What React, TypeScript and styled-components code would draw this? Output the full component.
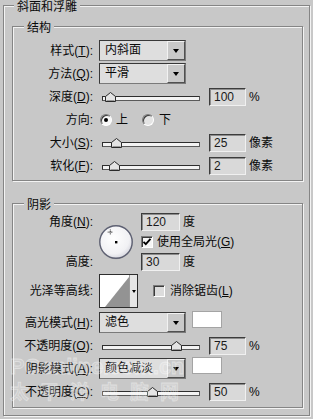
import React from "react";
import styled, { createGlobalStyle } from "styled-components";

const BG = "#c8c8c8";

const GlobalStyle = createGlobalStyle`
  html, body { margin: 0; padding: 0; background: ${BG}; }
  body {
    font-family: "Liberation Sans", "Noto Sans CJK SC", sans-serif;
    font-size: 12px;
    color: #0a0a0a;
  }
`;

const Page = styled.div`
  position: relative;
  width: 313px;
  height: 419px;
  overflow: hidden;
  background: ${BG};
`;

const Group = styled.fieldset<{ $pad: string; $margin: string }>`
  margin: ${(p) => p.$margin};
  padding: ${(p) => p.$pad};
  border: 1px solid #858585;
  box-shadow: inset 1px 1px 0 #f3f3f3, 1px 1px 0 #f3f3f3;
  min-width: 0;
  box-sizing: border-box;
`;

const Legend = styled.legend<{ $indent: number }>`
  margin-left: ${(p) => p.$indent}px;
  padding: 5px 3px 0;
  line-height: 13px;
  font-size: 12px;
  background: ${BG};
`;

const Row = styled.div<{ $h?: number; $mt?: number }>`
  display: grid;
  grid-template-columns: 80px 1fr;
  column-gap: 6px;
  align-items: center;
  height: ${(p) => p.$h ?? 23}px;
  margin-top: ${(p) => p.$mt ?? 0}px;
`;

const Label = styled.span<{ $row?: number }>`
  text-align: right;
  white-space: nowrap;
  line-height: 14px;
  grid-column: 1;
  ${(p) => (p.$row ? `grid-row: ${p.$row};` : "")}
`;

const Key = styled.span`
  text-decoration: underline;
  text-underline-offset: 1px;
`;

const Controls = styled.div<{ $row?: number }>`
  display: flex;
  align-items: center;
  height: 100%;
  white-space: nowrap;
  ${(p) => (p.$row ? `grid-row: ${p.$row}; grid-column: 3;` : "")}
`;

const Select = styled.div`
  width: 87px;
  height: 21px;
  box-sizing: border-box;
  display: flex;
  align-items: stretch;
  border: 1px solid;
  border-color: #383838 #7a7a7a #7a7a7a #383838;
  background: #dedede;
`;

const SelectText = styled.span`
  flex: 1;
  padding-left: 5px;
  line-height: 19px;
  white-space: nowrap;
`;

const SelectButton = styled.span`
  width: 18px;
  box-sizing: border-box;
  border: 1px solid;
  border-color: #f2f2f2 #505050 #505050 #f2f2f2;
  background: #c9c9c9;
  display: flex;
  align-items: center;
  justify-content: center;
  &::after {
    content: "";
    border-left: 3.5px solid transparent;
    border-right: 3.5px solid transparent;
    border-top: 4px solid #000;
  }
`;

const Field = styled.div<{ $w?: number }>`
  width: ${(p) => p.$w ?? 37}px;
  height: 18px;
  box-sizing: border-box;
  border: 1px solid;
  border-color: #3c3c3c #f0f0f0 #f0f0f0 #3c3c3c;
  box-shadow: inset 1px 1px 0 #8c8c8c;
  background: #d9d9d9;
  padding-left: 4px;
  line-height: 16px;
  font-size: 12px;
  color: #1a1a1a;
`;

const Unit = styled.span`
  margin-left: 3px;
  line-height: 14px;
`;

const Slider = styled.div`
  position: relative;
  width: 98px;
  height: 13px;
  margin: 0 9px 0 3px;
`;

const Track = styled.div`
  margin-top: 6px;
  height: 5px;
  box-sizing: border-box;
  border: 1px solid;
  border-color: #2e2e2e #5a5a5a #5a5a5a #2e2e2e;
  background: #f3f3f3;
`;

const Thumb = styled.svg`
  position: absolute;
  top: 2px;
  margin-left: -5px;
`;

const Radio = styled.span<{ $on?: boolean; $ml: number }>`
  width: 12px;
  height: 12px;
  margin-left: ${(p) => p.$ml}px;
  border-radius: 50%;
  box-sizing: border-box;
  border: 1px solid;
  border-color: #7a7a7a #ffffff #ffffff #7a7a7a;
  background: ${(p) => (p.$on ? "#f8f8f8" : "#e4e4e4")};
  box-shadow: inset 1px 1px 0 #3a3a3a;
  display: inline-flex;
  align-items: center;
  justify-content: center;
  &::after {
    content: "";
    width: 4px;
    height: 4px;
    border-radius: 50%;
    background: ${(p) => (p.$on ? "#000" : "transparent")};
  }
`;

const OptionText = styled.span<{ $ml: number }>`
  margin-left: ${(p) => p.$ml}px;
  line-height: 14px;
`;

const Check = styled.span<{ $on?: boolean; $ml?: number }>`
  width: 12px;
  height: 12px;
  margin-left: ${(p) => p.$ml ?? 0}px;
  box-sizing: border-box;
  border: 1px solid;
  border-color: #7a7a7a #ffffff #ffffff #7a7a7a;
  box-shadow: inset 1px 1px 0 #3a3a3a;
  background: ${(p) => (p.$on ? "#f6f6f6" : "#dcdcdc")};
  display: inline-flex;
  align-items: center;
  justify-content: center;
`;

const Swatch = styled.span`
  width: 30px;
  height: 17px;
  margin-left: 6px;
  align-self: flex-start;
  box-sizing: border-box;
  border: 1px solid #a4a4a4;
  background: #ffffff;
`;

const AngleGrid = styled.div`
  display: grid;
  grid-template-columns: 80px 38px 1fr;
  grid-template-rows: 19px 19px 19px;
  column-gap: 5px;
  row-gap: 1px;
  align-items: center;
`;

const Dial = styled.svg`
  grid-column: 2;
  grid-row: 1 / 4;
  align-self: center;
  margin-top: 1px;
`;

const ContourBox = styled.div`
  width: 39px;
  height: 34px;
  box-sizing: border-box;
  border: 1px solid #2e2e2e;
  background: #ffffff;
  display: flex;
`;

const ContourArrow = styled.span`
  flex: 1;
  border-left: 1px solid #9a9a9a;
  background: #e6e6e6;
  display: flex;
  align-items: center;
  justify-content: center;
  &::after {
    content: "";
    border-left: 2.5px solid transparent;
    border-right: 2.5px solid transparent;
    border-top: 3px solid #000;
  }
`;

const Watermark = styled.div`
  position: absolute;
  left: 10px;
  top: 356px;
  pointer-events: none;
  color: rgba(255, 255, 255, 0.16);
  -webkit-text-stroke: 0.8px rgba(255, 255, 255, 0.38);
  font-weight: bold;
  line-height: 1;
`;

const MarkLatin = styled.div`
  font-family: "Liberation Sans", sans-serif;
  font-size: 22px;
  letter-spacing: -0.3px;
`;

const MarkCjk = styled.div`
  font-family: "Noto Sans CJK SC", sans-serif;
  font-size: 19px;
  letter-spacing: 11px;
  margin-top: 3px;
`;

const SliderControl = ({ pos }: { pos: number }) => (
  <Slider>
    <Track />
    <Thumb width="11" height="10" viewBox="0 0 11 10" style={{ left: pos }}>
      <polygon
        points="0.5,9.5 0.5,4.5 5.5,0.5 10.5,4.5 10.5,9.5"
        fill="#e4e4e4"
        stroke="#2a2a2a"
        strokeWidth="1"
      />
      <line x1="1.5" y1="8.5" x2="9.5" y2="8.5" stroke="#9a9a9a" strokeWidth="1" />
    </Thumb>
  </Slider>
);

const CheckMark = () => (
  <svg width="10" height="10" viewBox="0 0 10 10">
    <path d="M1.5 4.8 L3.8 7.2 L8.5 1.8" fill="none" stroke="#000" strokeWidth="1.8" />
  </svg>
);

const Dropdown = ({ value }: { value: string }) => (
  <Select>
    <SelectText>{value}</SelectText>
    <SelectButton />
  </Select>
);

export default function App() {
  return (
    <Page>
      <GlobalStyle />
      <Group $margin="-4px 3px 0" $pad="3px 6px 7px 8px">
        <Legend $indent={2}>斜面和浮雕</Legend>

        <Group $margin="0" $pad="4px 0 3px">
          <Legend $indent={11}>结构</Legend>
          <Row>
            <Label>
              样式(<Key>T</Key>):
            </Label>
            <Controls>
              <Dropdown value="内斜面" />
            </Controls>
          </Row>
          <Row>
            <Label>
              方法(<Key>Q</Key>):
            </Label>
            <Controls>
              <Dropdown value="平滑" />
            </Controls>
          </Row>
          <Row>
            <Label>
              深度(<Key>D</Key>):
            </Label>
            <Controls>
              <SliderControl pos={8} />
              <Field>100</Field>
              <Unit>%</Unit>
            </Controls>
          </Row>
          <Row>
            <Label>方向:</Label>
            <Controls>
              <Radio $on $ml={1} />
              <OptionText $ml={4}>上</OptionText>
              <Radio $ml={14} />
              <OptionText $ml={5}>下</OptionText>
            </Controls>
          </Row>
          <Row>
            <Label>
              大小(<Key>S</Key>):
            </Label>
            <Controls>
              <SliderControl pos={14} />
              <Field>25</Field>
              <Unit>像素</Unit>
            </Controls>
          </Row>
          <Row>
            <Label>
              软化(<Key>F</Key>):
            </Label>
            <Controls>
              <SliderControl pos={12} />
              <Field>2</Field>
              <Unit>像素</Unit>
            </Controls>
          </Row>
        </Group>

        <Group $margin="13px 0 0" $pad="0 0 4px">
          <Legend $indent={11}>阴影</Legend>
          <AngleGrid>
            <Label $row={1}>
              角度(<Key>N</Key>):
            </Label>
            <Dial width="36" height="36" viewBox="0 0 36 36">
              <defs>
                <radialGradient id="dialFill" cx="42%" cy="38%" r="65%">
                  <stop offset="0" stopColor="#ffffff" />
                  <stop offset="0.75" stopColor="#f1f1f4" />
                  <stop offset="1" stopColor="#d6d6de" />
                </radialGradient>
              </defs>
              <circle cx="18" cy="18.6" r="16.6" fill="#a8a8a8" />
              <circle cx="18" cy="18" r="16.2" fill="url(#dialFill)" stroke="#5d6072" strokeWidth="1.4" />
              <path d="M12.3 5.5v5.2M9.7 8.1h5.2" stroke="#202020" strokeWidth="0.9" strokeDasharray="1 0.6" />
              <rect x="17" y="17" width="2.4" height="2.4" fill="#000" />
            </Dial>
            <Controls $row={1}>
              <Field $w={39}>120</Field>
              <Unit>度</Unit>
            </Controls>
            <Controls $row={2}>
              <Check $on>
                <CheckMark />
              </Check>
              <OptionText $ml={4}>
                使用全局光(<Key>G</Key>)
              </OptionText>
            </Controls>
            <Label $row={3}>高度:</Label>
            <Controls $row={3}>
              <Field $w={39}>30</Field>
              <Unit>度</Unit>
            </Controls>
          </AngleGrid>

          <Row $h={34} $mt={3}>
            <Label>光泽等高线:</Label>
            <Controls>
              <ContourBox>
                <svg width="29" height="32" viewBox="0 0 29 32">
                  <rect width="29" height="32" fill="#ffffff" />
                  <polygon points="5,32 29,2 29,32" fill="#939393" />
                </svg>
                <ContourArrow />
              </ContourBox>
              <Check $ml={15} />
              <OptionText $ml={5}>
                消除锯齿(<Key>L</Key>)
              </OptionText>
            </Controls>
          </Row>

          <Row $mt={3}>
            <Label>
              高光模式(<Key>H</Key>):
            </Label>
            <Controls>
              <Dropdown value="滤色" />
              <Swatch />
            </Controls>
          </Row>
          <Row>
            <Label>
              不透明度(<Key>O</Key>):
            </Label>
            <Controls>
              <SliderControl pos={74} />
              <Field>75</Field>
              <Unit>%</Unit>
            </Controls>
          </Row>
          <Row>
            <Label>
              阴影模式(<Key>A</Key>):
            </Label>
            <Controls>
              <Dropdown value="颜色减淡" />
              <Swatch />
            </Controls>
          </Row>
          <Row>
            <Label>
              不透明度(<Key>C</Key>):
            </Label>
            <Controls>
              <SliderControl pos={50} />
              <Field>50</Field>
              <Unit>%</Unit>
            </Controls>
          </Row>
        </Group>
      </Group>

      <Watermark aria-hidden="true">
        <MarkLatin>PConline.com.cn</MarkLatin>
        <MarkCjk>太平洋电脑网</MarkCjk>
      </Watermark>
    </Page>
  );
}
